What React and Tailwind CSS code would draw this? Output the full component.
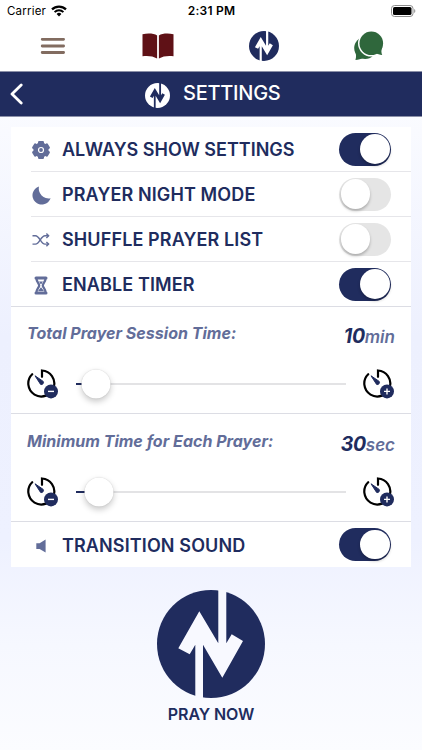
import { useState } from "react";

// Round mark with the two opposing arrows, the arrows are cut out in `arrow`
function Logo({ size, disc = "#202c5e", arrow = "#ffffff" }) {
  return (
    <svg width={size} height={size} viewBox="0 0 108 108" className="block shrink-0">
      <circle cx="54" cy="54" r="54" fill={disc} />
      <path
        d="M42.3 21.3 21.3 58.3 32.7 64.3 38.3 54.7V108H46V54.7L65.3 87.7 86 51 74.7 44.3 69.3 53.3V0H61.3V53.3Z"
        fill={arrow}
      />
    </svg>
  );
}

function StatusBar() {
  return (
    <div className="flex h-[22px] items-center justify-between pl-[7px] pr-[6px] text-black">
      <div className="flex w-[140px] items-center gap-[5px]">
        <span className="text-[11.5px] leading-[22px] tracking-[0.2px]">Carrier</span>
        <svg width="16" height="12" viewBox="0 0 16 12">
          <path d="M1 4.4a10 10 0 0 1 14 0" fill="none" stroke="#000" strokeWidth="2.2" />
          <path d="M3.6 7.1a6.2 6.2 0 0 1 8.8 0" fill="none" stroke="#000" strokeWidth="2" />
          <path d="M8 11.4 5.6 8.9a3.4 3.4 0 0 1 4.8 0Z" fill="#000" />
        </svg>
      </div>
      <span className="text-[12px] font-semibold leading-[22px] tracking-[0.25px]">2:31 PM</span>
      <div className="flex w-[140px] justify-end pb-[1px]">
        <svg width="25" height="12" viewBox="0 0 25 12">
          <rect x="0.5" y="0.5" width="21.5" height="11" rx="3" fill="none" stroke="#8d8d8d" />
          <rect x="2" y="2" width="18.5" height="8" rx="1.6" fill="#000" />
          <path d="M23.2 4v4c1.5-.6 1.5-3.4 0-4Z" fill="#8d8d8d" />
        </svg>
      </div>
    </div>
  );
}

function TabBar() {
  return (
    <div className="grid h-[49px] grid-cols-4">
      <div className="flex items-center justify-center pb-[1px]">
        <svg width="26" height="18" viewBox="0 0 26 18" stroke="#826c60" strokeWidth="2.8" strokeLinecap="round">
          <path d="M2.2 2.3H23.6M2.2 9H23.6M2.2 15.5H23.6" />
        </svg>
      </div>
      <div className="flex items-center justify-center pb-[1px]">
        <svg width="32" height="26" viewBox="0 0 32 26" fill="#5f1116">
          <path d="M0.5 1.2C6 .2 12 .4 15.1 2.6V25.6C11 23 6 22.6 0.5 23.2Z" />
          <path d="M31.5 1.2C26 .2 20 .4 16.9 2.6V25.6C21 23 26 22.6 31.5 23.2Z" />
        </svg>
      </div>
      <div className="flex items-center justify-center pb-[2px]">
        <Logo size={30} />
      </div>
      <div className="flex items-center justify-center pb-[1px]">
        <svg width="30" height="30" viewBox="0 0 30 30" fill="#2f673c">
          <circle cx="11.2" cy="17" r="11" />
          <path d="M.6 19.5C2.4 22.5 2.4 26 1.4 28.9 4.5 28.8 7 28 9 27Z" />
          <circle cx="17.3" cy="12.3" r="13.3" fill="#fff" />
          <circle cx="17.3" cy="12.3" r="11.8" />
          <path d="M28.4 16C27 19 27.2 21.8 28.2 24 25.6 23.9 23.4 23 21.4 22Z" />
        </svg>
      </div>
    </div>
  );
}

function Header() {
  return (
    <header className="flex h-[46px] items-center border-y border-[#8b90a8] bg-[#202c5e] text-white">
      <svg width="13" height="22" viewBox="0 0 13 22" className="ml-[10px]">
        <path d="M11.2 2 2 11l9.2 9" fill="none" stroke="#fff" strokeWidth="2.8" strokeLinecap="round" strokeLinejoin="round" />
      </svg>
      <div className="ml-[122px] flex items-center pt-[2px]">
        <Logo size={25} disc="#ffffff" arrow="#202c5e" />
      </div>
      <h1 className="ml-[13px] pb-[2px] text-[20px] font-medium leading-[24px] tracking-[-0.25px]">SETTINGS</h1>
    </header>
  );
}

function Toggle({ on, onChange }) {
  return (
    <button
      type="button"
      role="switch"
      aria-checked={on}
      onClick={() => onChange(!on)}
      className={`flex h-[33px] w-[52px] shrink-0 items-center rounded-full ${on ? "justify-end bg-[#202c5e] px-[1.5px]" : "justify-start bg-[#e5e5e5] px-[1.5px]"}`}
    >
      <span className="size-[29.5px] rounded-full bg-white shadow-[0_2px_3px_rgba(0,0,0,0.25)]" />
    </button>
  );
}

function GearIcon() {
  return (
    <svg width="18" height="18" viewBox="0 0 18 18">
      <g fill="#626d99">
        <circle cx="9" cy="9" r="7.6" />
        {[0, 60, 120].map((a) => (
          <rect key={a} x="6" y="0" width="6" height="18" rx="1.2" transform={`rotate(${a} 9 9)`} />
        ))}
      </g>
      <circle cx="9" cy="9" r="2.5" fill="none" stroke="#fff" strokeWidth="1.2" />
    </svg>
  );
}

function MoonIcon() {
  return (
    <svg width="19" height="19" viewBox="0 0 19 19">
      <path d="M7 .4A9.3 9.3 0 1 0 18.6 12.2 9.9 9.9 0 0 1 7 .4Z" fill="#626d99" />
    </svg>
  );
}

function ShuffleIcon() {
  return (
    <svg width="18" height="14" viewBox="0 0 18 14" fill="none" stroke="#626d99" strokeWidth="1.4">
      <path d="M.5 2.7H3.4C7.8 2.7 8.6 11.1 13 11.1H16.5" />
      <path d="M.5 11.1H3.4C7.8 11.1 8.6 2.7 13 2.7H16.5" />
      <path d="M14.4.5 16.6 2.7 14.4 4.9M14.4 8.9 16.6 11.1 14.4 13.3" />
    </svg>
  );
}

function HourglassIcon() {
  return (
    <svg width="14" height="19" viewBox="0 0 14 19" fill="none" stroke="#626d99" strokeWidth="2.3">
      <path d="M2.4 2C2.4 6 5.2 7.2 5.2 9.4S2.4 12.6 2.4 16.8M11.6 2C11.6 6 8.8 7.2 8.8 9.4S11.6 12.6 11.6 16.8" />
      <path d="M2 2H12M2 17H12" strokeWidth="3" strokeLinecap="round" />
      <path d="M5 5.5H9L7.4 8H6.6ZM7 11.2 10 15H4Z" fill="#626d99" stroke="none" />
    </svg>
  );
}

function SpeakerIcon() {
  return (
    <svg width="10" height="14" viewBox="0 0 10 14">
      <path d="M.3 4.3H3.6L9.6.4V13.6L3.6 10H.3Z" fill="#626d99" />
    </svg>
  );
}

// The last row of a group gets a full width divider, the others an inset one
function SettingRow({ icon, label, tracking = "tracking-[0.12px]", divider = "inset", on, onChange }) {
  return (
    <div className={`h-[45px] pl-[20px] ${divider === "full" ? "border-b border-[#dcdde4]" : ""}`}>
      <div className={`flex h-full items-center pr-[20px] ${divider === "inset" ? "border-b border-[#e6e6ea]" : ""}`}>
        <div className="flex w-[20px] justify-center pt-[2px]">{icon}</div>
        <span
          className={`ml-[11px] flex-1 whitespace-nowrap text-[18px] font-semibold leading-[24px] text-[#202c5e] ${divider === "none" ? "pt-[2px]" : "pt-[1px]"} ${tracking}`}
        >
          {label}
        </span>
        <Toggle on={on} onChange={onChange} />
      </div>
    </div>
  );
}

function DialIcon({ plus }) {
  return (
    <svg width="32" height="30" viewBox="0 0 32 30" className="shrink-0">
      <path d="M5.2 5.2A13 13 0 1 0 15 1.5V7.8" fill="none" stroke="#000" strokeWidth="2.2" strokeLinecap="round" />
      <path d="M8 6.8 16.2 12.4A2.1 2.1 0 0 1 13.6 15.4Z" fill="#202c5e" stroke="#202c5e" strokeWidth="1" strokeLinejoin="round" />
      <circle cx="24" cy="22.4" r="7" fill="#202c5e" />
      <path d={plus ? "M21 22.4H27M24 19.4V25.4" : "M21 22.4H27"} stroke="#fff" strokeWidth="1.4" />
    </svg>
  );
}

function TimeSection({ label, value, unit, percent, spacing }) {
  return (
    <div className={`border-b border-[#dcdde4] px-[16px] ${spacing}`}>
      <div className="flex h-[24px] items-start justify-between italic text-[#626d99]">
        <span className="text-[16px] font-bold leading-[20px] tracking-[0.02px]">{label}</span>
        <span className="font-semibold leading-[26px]">
          <span className="text-[19.5px] font-bold tracking-[-0.3px] text-[#202c5e]">{value}</span>
          <span className="text-[17px]">{unit}</span>
        </span>
      </div>
      <div className="mt-[22px] flex items-center">
        <DialIcon />
        <div className="relative ml-[17px] mr-[17px] h-[2px] flex-1 bg-[#e3e3e5]">
          <div className="h-[2px] bg-[#202c5e]" style={{ width: `${percent}%` }} />
          <div
            className="absolute top-1/2 size-[29px] -translate-x-1/2 -translate-y-1/2 rounded-full bg-white shadow-[0_3px_6px_rgba(0,0,0,0.22),0_0_1px_rgba(0,0,0,0.2)]"
            style={{ left: `${percent}%` }}
          />
        </div>
        <DialIcon plus />
      </div>
    </div>
  );
}

export default function App() {
  const [settings, setSettings] = useState({ show: true, night: false, shuffle: false, timer: true, sound: true });
  const bind = (key) => ({
    on: settings[key],
    onChange: (value) => setSettings({ ...settings, [key]: value }),
  });

  return (
    <div className="flex h-[750px] w-[422px] flex-col overflow-hidden bg-[linear-gradient(180deg,#fafbff_15%,#edf0fe_45%,#eef1ff_72%,#f6f8ff_86%,#fbfcff_100%)] font-['Inter','Liberation_Sans',sans-serif]">
      <div className="bg-white">
        <StatusBar />
        <TabBar />
      </div>
      <Header />
      <main className="mx-[11px] mt-[10px] w-[400px] bg-white">
        <SettingRow icon={<GearIcon />} label="ALWAYS SHOW SETTINGS" tracking="tracking-normal" {...bind("show")} />
        <SettingRow icon={<MoonIcon />} label="PRAYER NIGHT MODE" {...bind("night")} />
        <SettingRow icon={<ShuffleIcon />} label="SHUFFLE PRAYER LIST" {...bind("shuffle")} />
        <SettingRow icon={<HourglassIcon />} label="ENABLE TIMER" divider="full" {...bind("timer")} />
        <TimeSection label="Total Prayer Session Time:" value="10" unit="min" percent={7.5} spacing="h-[107px] pt-[16px]" />
        <TimeSection label="Minimum Time for Each Prayer:" value="30" unit="sec" percent={8.5} spacing="h-[108px] pt-[17px]" />
        <SettingRow icon={<SpeakerIcon />} label="TRANSITION SOUND" divider="none" {...bind("sound")} />
      </main>
      <button type="button" className="mt-[23px] flex flex-col items-center self-center text-[#202c5e]">
        <Logo size={108} arrow="#f8f9ff" />
        <span className="mt-[6px] text-[16px] font-semibold leading-[20px] tracking-[-0.1px]">PRAY NOW</span>
      </button>
    </div>
  );
}
